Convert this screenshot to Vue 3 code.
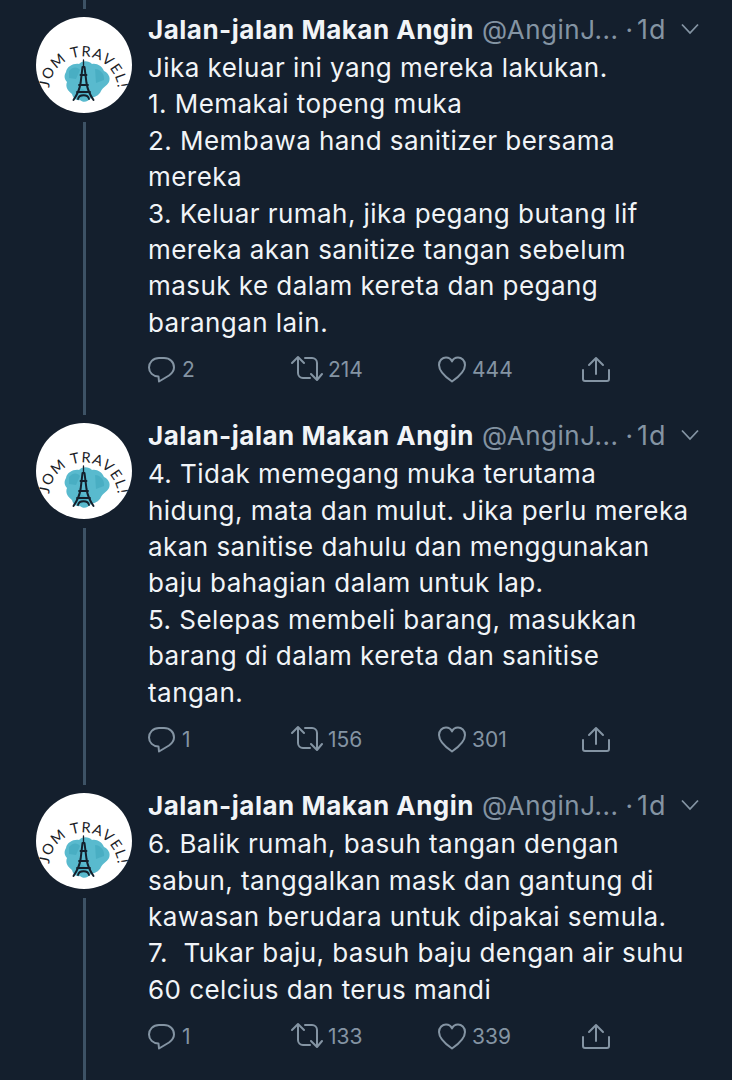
<script setup>
const tweets = [
  {
    lines: [
      'Jika keluar ini yang mereka lakukan.',
      '1. Memakai topeng muka',
      '2. Membawa hand sanitizer bersama',
      'mereka',
      '3. Keluar rumah, jika pegang butang lif',
      'mereka akan sanitize tangan sebelum',
      'masuk ke dalam kereta dan pegang',
      'barangan lain.'
    ],
    replies: 2, retweets: 214, likes: 444
  },
  {
    lines: [
      '4. Tidak memegang muka terutama',
      'hidung, mata dan mulut. Jika perlu mereka',
      'akan sanitise dahulu dan menggunakan',
      'baju bahagian dalam untuk lap.',
      '5. Selepas membeli barang, masukkan',
      'barang di dalam kereta dan sanitise',
      'tangan.'
    ],
    replies: 1, retweets: 156, likes: 301
  },
  {
    lines: [
      '6. Balik rumah, basuh tangan dengan',
      'sabun, tanggalkan mask dan gantung di',
      'kawasan berudara untuk dipakai semula.',
      '7.  Tukar baju, basuh baju dengan air suhu',
      '60 celcius dan terus mandi'
    ],
    replies: 1, retweets: 133, likes: 339
  }
]
</script>

<template>
  <main class="thread">
    <article v-for="(t, i) in tweets" :key="i" class="tweet">
      <div class="rail">
        <span class="stub"></span>
        <svg class="avatar" viewBox="0 0 96 96" role="img" aria-label="Jom Travel">
          <circle cx="48" cy="48" r="48" fill="#fff" />
          <path d="M30 55C31 49 38 46 43 47C47 43 53 44 56 47C61 46 66 49 68 54C72 56 75 60 73 65C71 69 67 70 65 74C63 79 58 80 55 81C52 85 47 86 44 83C40 84 37 81 36 77C32 74 29 70 31 65C28 62 28 58 30 55Z" fill="#59bace" />
          <path d="M33 54C37 49 42 50 44 53L40 62L33 61ZM59 52C65 52 69 58 68 63L60 66ZM42 72C46 71 50 73 51 77L45 81Z" fill="#3fa6bd" opacity=".6" />
          <g fill="none" stroke="#14202c" stroke-linecap="round">
            <path d="M47.500 43V50" stroke-width="1.300" />
            <path d="M46.500 50L44.600 66C43.500 73 41 78 37.500 83M48.500 50L50.500 66C51.600 73 54 78 57.500 83" stroke-width="2" />
            <path d="M44.500 58H50.500M43 68H52M41 75H54" stroke-width="1.800" />
            <path d="M42 82C43 77 52 77 53 82" stroke-width="1.800" />
          </g>
          <defs>
            <path :id="`arc-${i}`" d="M13 74A34.500 34.500 0 0 1 82 74" />
          </defs>
          <text class="logo-text" fill="#1a2126">
            <textPath :href="`#arc-${i}`" startOffset="50%" text-anchor="middle" textLength="102">JOM TRAVEL!</textPath>
          </text>
        </svg>
        <span class="line"></span>
      </div>

      <div class="content">
        <header class="head">
          <strong class="name">Jalan-jalan Makan Angin</strong>
          <span class="handle">@AnginJ...</span>
          <span class="dot">·</span>
          <span class="time">1d</span>
          <svg class="chevron" viewBox="0 0 18 12" fill="none" stroke="#8494a3" stroke-width="1.800">
            <path d="M1 1.500L9 10L17 1.500" />
          </svg>
        </header>

        <p class="body">
          <span v-for="(l, n) in t.lines" :key="n" class="text-line">{{ l }}</span>
        </p>

        <footer class="actions">
          <div class="action">
            <svg width="28" height="29" viewBox="0 0 28 29" class="icon">
              <path d="M11 26.500L10.500 21.500C5 21.500 1 17.500 1 12.500S5 3 11 3H16C22 3 26 7 26 12.500C26 16.500 23 19 21 20.500Z" />
            </svg>
            <span class="count">{{ t.replies }}</span>
          </div>
          <div class="action retweet">
            <svg width="32" height="30" viewBox="0 0 32 30" class="icon">
              <path d="M1 9L7 3L13 9M7 3V19A5 5 0 0 0 12 24H19" />
              <path d="M14 4H21A5 5 0 0 1 26 9V25M20 20L26 26L31 20" />
            </svg>
            <span class="count">{{ t.retweets }}</span>
          </div>
          <div class="action">
            <svg width="28" height="27" viewBox="0 0 28 27" class="icon">
              <path d="M14 25.500C6 20 1 15 1 9C1 4.500 4.500 1.500 8 1.500C10.500 1.500 13 3 14 5.500C15 3 17.500 1.500 20 1.500C23.500 1.500 27 4.500 27 9C27 15 22 20 14 25.500Z" />
            </svg>
            <span class="count">{{ t.likes }}</span>
          </div>
          <div class="action">
            <svg width="30" height="27" viewBox="0 0 30 27" class="icon">
              <path d="M2 14V23A2 2 0 0 0 4 25H26A2 2 0 0 0 28 23V14" />
              <path d="M15 18V2M8 9L15 2L22 9" />
            </svg>
          </div>
        </footer>
      </div>
    </article>
  </main>
</template>

<style scoped>
.thread {
  display: flex;
  flex-direction: column;
  min-height: 1080px;
  background: #141f2d;
  font-family: Inter, "Noto Sans", "Liberation Sans", sans-serif;
  overflow: hidden;
}
.tweet {
  display: flex;
  flex: 0 0 auto;
}
.tweet:last-child {
  flex: 1 0 auto;
}
.rail {
  flex: 0 0 148px;
  padding-left: 36px;
  padding-right: 16px;
  box-sizing: border-box;
  display: flex;
  flex-direction: column;
  align-items: center;
}
.stub {
  width: 3px;
  height: 9px;
  margin-bottom: 8px;
  background: #3d5265;
}
.avatar {
  width: 96px;
  height: 96px;
  flex: none;
  display: block;
}
.line {
  width: 3px;
  flex: 1;
  margin-top: 9px;
  background: #3d5265;
}
.logo-text {
  font-family: Lato, "Liberation Sans", sans-serif;
  font-size: 14.5px;
}
.content {
  flex: 1;
  min-width: 0;
  padding-top: 11px;
  padding-bottom: 17px;
}
.head {
  display: flex;
  align-items: center;
  height: 36px;
  font-size: 26px;
  white-space: nowrap;
}
.name {
  font-weight: 700;
  letter-spacing: 0.5px;
  color: #f1f4f7;
}
.handle {
  margin-left: 8px;
  letter-spacing: 0.5px;
  color: #8494a3;
}
.dot {
  margin-left: 7px;
  color: #8494a3;
}
.time {
  margin-left: 4px;
  letter-spacing: 1px;
  font-size: 27px;
  color: #8494a3;
}
.chevron {
  width: 18px;
  height: 12px;
  margin-left: 14px;
}
.body {
  margin: 3px 0 8px;
  font-size: 26px;
  letter-spacing: 0.45px;
  line-height: 36.4px;
  color: #f1f4f7;
}
.text-line {
  display: block;
  white-space: pre;
}
.actions {
  display: grid;
  grid-template-columns: 143px 147px 143px auto;
  height: 40px;
  align-items: center;
}
.action {
  display: flex;
  align-items: center;
  gap: 6px;
}
.retweet {
  gap: 5px;
}
.icon {
  fill: none;
  stroke: #8494a3;
  stroke-width: 2;
  stroke-linecap: round;
  stroke-linejoin: round;
  flex: none;
}
.count {
  font-size: 21px;
  color: #8494a3;
}
</style>

<style>
body {
  background: #141f2d;
}
</style>
